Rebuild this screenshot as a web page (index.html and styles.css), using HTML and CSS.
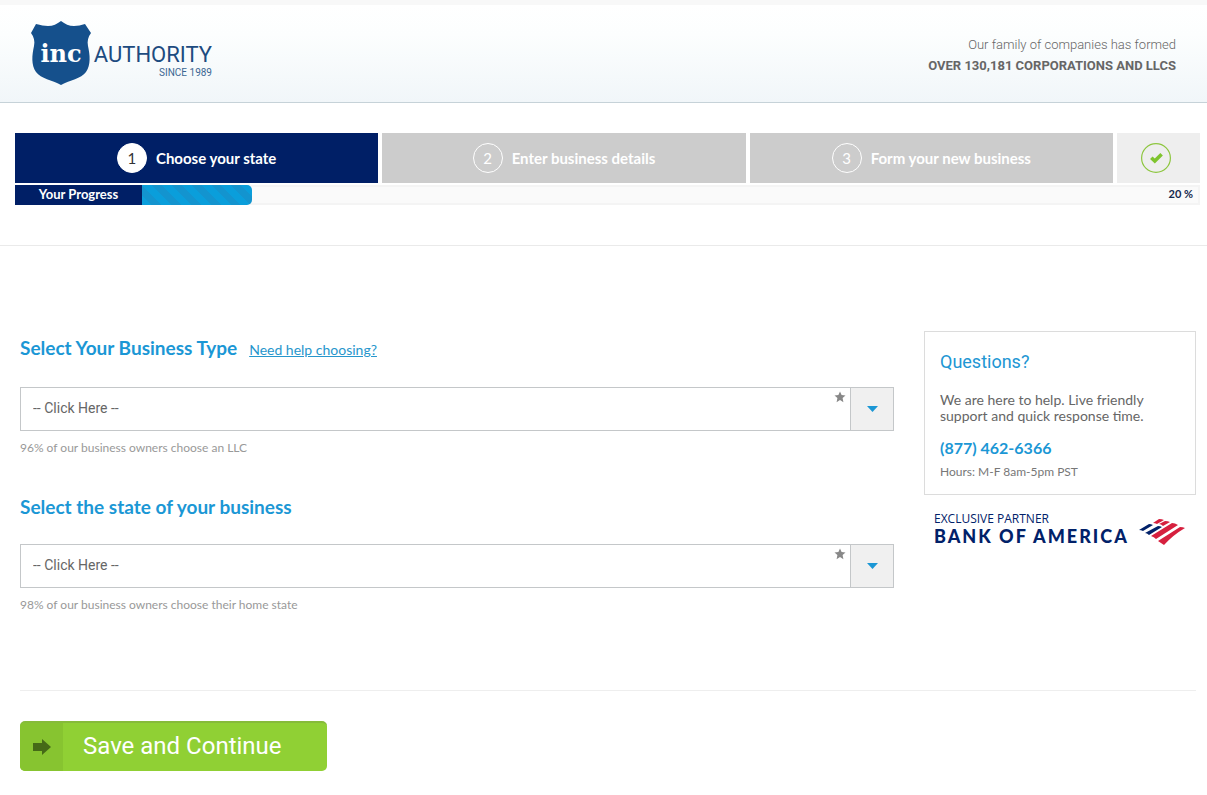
FILE: index.html
```html
<!DOCTYPE html>
<html lang="en">
<head>
<meta charset="utf-8">
<meta name="viewport" content="width=device-width, initial-scale=1">
<title>Inc Authority - Choose your state</title>
<link rel="stylesheet" href="styles.css">
</head>
<body>
<header class="site-header">
  <a class="logo" href="#" aria-label="Inc Authority">
    <svg width="184" height="66" viewBox="0 0 184 66" aria-hidden="true">
      <path class="logo-shield" d="M31 0C35 3 39 5 44 5C48 5 51 4 55 3L61 12C58 16 57 20 58 25C60 34 61 44 56 51C51 58 40 59 31 64C22 59 11 58 6 51C1 44 2 34 4 25C5 20 4 16 1 12L6 3C11 4 14 5 18 5C23 5 27 3 31 0Z"/>
      <text class="logo-inc" x="31" y="41" text-anchor="middle">inc</text>
      <text class="logo-name" x="182" y="41" text-anchor="end">AUTHORITY</text>
      <text class="logo-since" x="182" y="55" text-anchor="end">SINCE 1989</text>
    </svg>
  </a>
  <p class="tally">Our family of companies has formed<strong>OVER 130,181 CORPORATIONS AND LLCS</strong></p>
</header>

<nav class="progress" aria-label="Progress">
  <ol class="steps">
    <li class="step step-active"><span class="step-number">1</span>Choose your state</li>
    <li class="step"><span class="step-number">2</span>Enter business details</li>
    <li class="step"><span class="step-number">3</span>Form your new business</li>
    <li class="step step-done">
      <svg width="30" height="30" viewBox="0 0 30 30" role="img" aria-label="Done"><circle cx="15" cy="15" r="14.4" fill="none" stroke="#8dc63f" stroke-width="1.2"/><path d="M10.3 14.7L13.8 18L20.6 11.2" fill="none" stroke="#7fc42e" stroke-width="3.6"/></svg>
    </li>
  </ol>
  <div class="meter">
    <span class="meter-label">Your Progress</span>
    <span class="meter-fill"></span>
    <span class="meter-value">20 %</span>
  </div>
</nav>

<main class="content">
  <form class="form" id="business">
    <div class="field">
      <div class="field-head">
        <label class="field-title" for="type">Select Your Business Type</label>
        <a class="help" href="#">Need help choosing?</a>
      </div>
      <div class="picker">
        <select id="type"><option>-- Click Here --</option></select>
        <svg class="star" width="12" height="12" viewBox="0 0 12 12" aria-hidden="true"><path d="M6 .4L7.6 4L11.5 4.4L8.6 7L9.4 11.2L6 9.1L2.6 11.2L3.4 7L.5 4.4L4.4 4Z"/></svg>
        <span class="arrow"><svg width="11" height="6" viewBox="0 0 11 6" aria-hidden="true"><path d="M0 0H11L5.5 6Z"/></svg></span>
      </div>
      <p class="hint">96% of our business owners choose an LLC</p>
    </div>
    <div class="field">
      <div class="field-head">
        <label class="field-title" for="state">Select the state of your business</label>
      </div>
      <div class="picker">
        <select id="state"><option>-- Click Here --</option></select>
        <svg class="star" width="12" height="12" viewBox="0 0 12 12" aria-hidden="true"><path d="M6 .4L7.6 4L11.5 4.4L8.6 7L9.4 11.2L6 9.1L2.6 11.2L3.4 7L.5 4.4L4.4 4Z"/></svg>
        <span class="arrow"><svg width="11" height="6" viewBox="0 0 11 6" aria-hidden="true"><path d="M0 0H11L5.5 6Z"/></svg></span>
      </div>
      <p class="hint">98% of our business owners choose their home state</p>
    </div>
  </form>

  <aside class="side">
    <section class="questions">
      <h2>Questions?</h2>
      <p class="lead">We are here to help. Live friendly support and quick response time.</p>
      <a class="phone" href="tel:+18774626366">(877) 462-6366</a>
      <p class="hours">Hours: M-F 8am-5pm PST</p>
    </section>
    <div class="partner">
      <div>
        <p class="partner-kind">EXCLUSIVE PARTNER</p>
        <p class="partner-name">BANK OF AMERICA</p>
      </div>
      <svg width="46" height="26" viewBox="0 0 46 26" aria-hidden="true">
        <g fill="#012169"><path d="M0 11L10 5Q12 5 14 6L4 12Q2 11 0 11Z"/><path d="M6 14L19 7Q21 7 23 8L10 16Q8 14 6 14Z"/></g>
        <g fill="#d6203e"><path d="M14 4L20 0Q23 0 25 1L18 5Q16 4 14 4Z"/><path d="M20 5L26 2Q29 2 31 3L24 7Q22 5 20 5Z"/><path d="M12 17L33 4Q36 4 39 6L17 20Q15 18 12 17Z"/><path d="M19 22L41 8Q44 8 46 9Q34 16 25 26Q22 24 19 22Z"/></g>
      </svg>
    </div>
  </aside>
</main>

<footer class="actions">
  <button class="save" type="submit" form="business">
    <span class="save-icon"><svg width="18" height="18" viewBox="0 0 18 18" aria-hidden="true"><path d="M0 5H9V1L18 9L9 17V13H0Z"/></svg></span>
    <span class="save-text">Save and Continue</span>
  </button>
</footer>
</body>
</html>
```

FILE: styles.css
```css
* { box-sizing: border-box; }

body {
  margin: 0;
  background: #fff;
  color: #666;
  font-family: Lato, "Liberation Sans", sans-serif;
}

p, h2, ol { margin: 0; padding: 0; }

.site-header {
  display: flex;
  justify-content: space-between;
  align-items: flex-start;
  padding: 16px 31px 15px 30px;
  border-top: 5px solid #f8f8f8;
  border-bottom: 1px solid #c6d2d8;
  background: linear-gradient(#fff, #fcfefe 30%, #f1f6f9);
}

.logo svg { display: block; }
.logo-shield { fill: #15508c; }
.logo-inc { fill: #fff; font: bold 24px "DejaVu Serif", serif; }
.logo-name { fill: #1d4b80; font: 400 22px Roboto, sans-serif; }
.logo-since { fill: #3c6793; font: 400 10px Roboto, sans-serif; }

.tally {
  padding-top: 13px;
  font: 300 13px/21px Roboto, sans-serif;
  text-align: right;
}
.tally strong { display: block; font-weight: 700; }

.progress {
  padding: 30px 7px 40px 15px;
  border-bottom: 1px solid #eaeaea;
}

.steps { display: flex; gap: 4px; list-style: none; }

.step {
  flex: 1;
  display: flex;
  align-items: center;
  justify-content: center;
  gap: 9px;
  height: 50px;
  background: #ccc;
  color: #fff;
  font-size: 15px;
  font-weight: 700;
}
.step-active { background: #001f66; }
.step-done { flex: 0 0 83px; padding-right: 5px; background: #eee; }

.step-number {
  width: 30px;
  height: 30px;
  border: 1px solid #fff;
  border-radius: 50%;
  font: 400 15px/28px Lato, sans-serif;
  text-align: center;
}
.step-active .step-number { background: #fff; color: #333; }

.meter {
  display: flex;
  height: 20px;
  margin-top: 2px;
  background: #fafafa;
  box-shadow: inset 0 0 0 2px #f4f4f4;
  line-height: 18px;
}
.meter-label {
  width: 127px;
  background: #001f66;
  color: #fff;
  font-size: 13px;
  font-weight: 700;
  text-align: center;
}
.meter-fill {
  width: 110px;
  border-radius: 0 5px 5px 0;
  background: repeating-linear-gradient(45deg, #0a9edb 0 7px, #1394cf 7px 14px);
}
.meter-value {
  margin-left: auto;
  padding-right: 7px;
  color: #14294d;
  font-size: 11px;
  font-weight: 700;
}

.content {
  display: flex;
  gap: 30px;
  margin: 0 11px 0 20px;
  padding: 85px 0 77px;
  border-bottom: 1px solid #eee;
}

.form { flex: 1; display: grid; gap: 34px; }

.field-head {
  display: flex;
  align-items: baseline;
  gap: 12px;
  line-height: 24px;
  margin-bottom: 25px;
  padding-top: 5px;
}
.field-title { color: #1b97d5; font-size: 19px; font-weight: 700; }
.help { color: #2796cc; font-size: 14px; }

.picker { position: relative; display: flex; }
.picker select {
  flex: 1;
  height: 44px;
  padding: 0 60px 2px 12px;
  border: 1px solid #c4c7c9;
  border-radius: 0;
  background: #fff;
  color: #666;
  font: 400 14px Roboto, sans-serif;
  appearance: none;
}
.star { position: absolute; top: 4px; right: 48px; fill: #888; }
.arrow {
  position: absolute;
  inset: 1px 1px 1px auto;
  display: grid;
  place-items: center;
  width: 43px;
  border-left: 1px solid #c4c7c9;
  background: #f0f0f0;
  pointer-events: none;
}
.arrow svg { fill: #1b97d5; }

.hint { padding-top: 9px; color: #999; font-size: 12px; line-height: 16px; }

.side { flex: 0 0 272px; }

.questions { padding: 18px 15px 14px; border: 1px solid #dcdcdc; }
.questions h2 {
  color: #2196d3;
  font: 400 18px/24px Roboto, sans-serif;
}
.lead { padding-top: 18px; font-size: 14px; line-height: 16px; }
.phone {
  display: block;
  padding-top: 13px;
  color: #1b97d5;
  font-size: 16px;
  font-weight: 700;
  line-height: 22px;
  text-decoration: none;
}
.hours { padding-top: 5px; color: #777; font-size: 12px; line-height: 16px; }

.partner {
  display: flex;
  align-items: flex-end;
  justify-content: space-between;
  padding: 16px 11px 0 10px;
  color: #012169;
}
.partner-kind { font: 400 12px/16px "Open Sans", sans-serif; }
.partner-name { font-size: 18px; font-weight: 900; line-height: 18px; letter-spacing: 2px; }

.actions { padding: 30px 20px 24px; }

.save {
  display: flex;
  width: 307px;
  height: 50px;
  padding: 0;
  overflow: hidden;
  border: 0;
  border-top: 2px solid #86bb3a;
  border-radius: 5px;
  background: #90d034;
  color: #fff;
  font: 400 24px/46px Roboto, sans-serif;
}
.save-icon { display: grid; place-items: center; width: 43px; height: 48px; background: #87c430; }
.save-icon svg { fill: #456a17; }
.save-text { padding-left: 20px; }
```
